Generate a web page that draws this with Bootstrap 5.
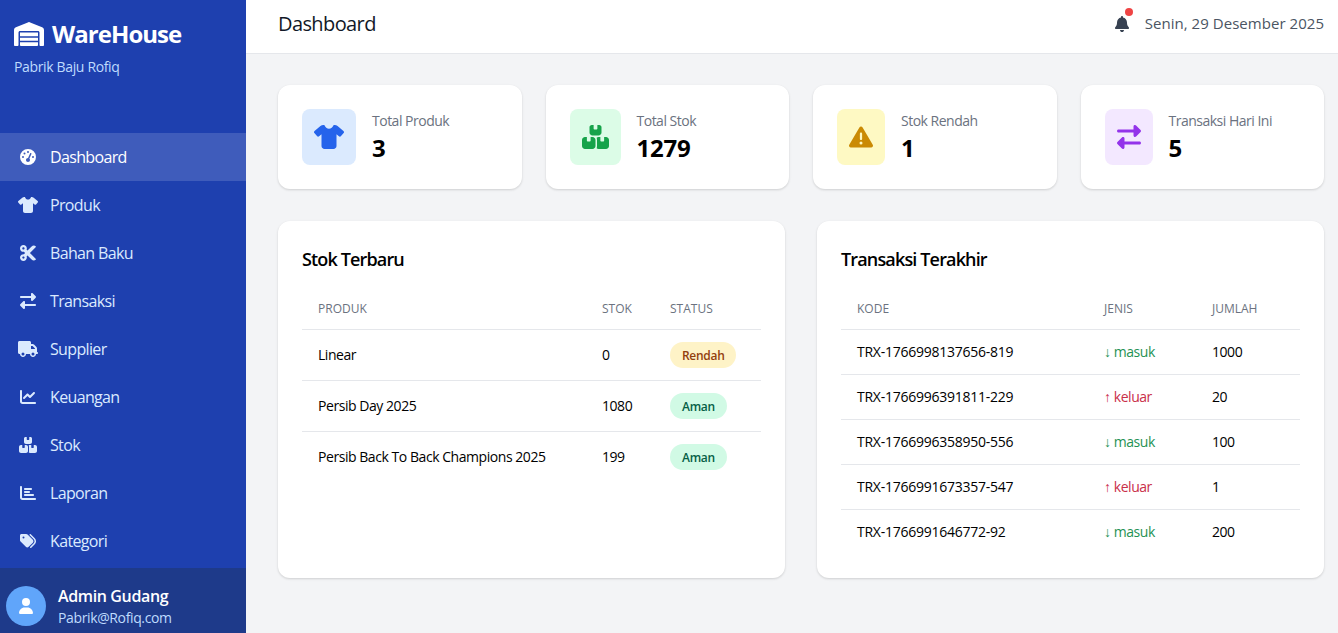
<!DOCTYPE html>
<html lang="id">
<head>
<meta charset="utf-8">
<title>WareHouse</title>
<link href="https://cdn.jsdelivr.net/npm/bootstrap@5.3.0/dist/css/bootstrap.min.css" rel="stylesheet">
<style>
html,body{height:100%;overflow:hidden}
body{font-family:"Open Sans","Noto Sans",sans-serif;background:#f3f4f6;color:#111827;font-size:14px}
.ico{fill:currentColor;display:block}
.app-shell{height:633px}
.side{width:246px;flex:none;background:#1e40af;color:#fff;overflow:hidden}
.brand{height:133px;padding:17px 14px 0}
.brand-name{font-size:24px;font-weight:700;line-height:34px;letter-spacing:-.95px}
.brand-sub{font-size:14px;color:#bfdbfe;line-height:20px;margin-top:6px;letter-spacing:-.35px}
.side-link{height:48px;color:#dbeafe;text-decoration:none;font-size:16px;letter-spacing:-.65px;padding-left:18px;gap:12px}
.side-link.active{background:rgba(255,255,255,.15);color:#fff}
.side-link .slot{width:20px;display:flex;justify-content:center}
.side-foot{background:#1e3a8a;height:65px;padding:18px 0 0 6px;gap:12px}
.avatar{width:40px;height:40px;border-radius:50%;background:#60a5fa;flex:none}
.foot-name{font-size:16px;font-weight:600;line-height:20px;letter-spacing:-.37px}
.foot-mail{font-size:14px;color:#bfdbfe;line-height:20px;margin-top:2px;letter-spacing:-.37px}
.top{height:54px;background:#fff;border-bottom:1px solid #e5e7eb;padding:0 14px 6px 32px}
.top h1{font-size:20px;font-weight:500;margin:0;letter-spacing:-.6px}
.bell-wrap{color:#374151;margin-right:16px}
.bell-dot{position:absolute;top:-8px;right:-4px;width:8px;height:8px;border-radius:50%;background:#ef4444}
.top-date{color:#4b5563;font-size:15px;letter-spacing:.04px}
.body-pad{padding:31px 14px 0 32px}
.sheet{background:#fff;border-radius:12px;box-shadow:0 1px 3px rgba(0,0,0,.1),0 1px 2px rgba(0,0,0,.06)}
.stat-card{height:104px;padding:24px;gap:16px}
.stat-box{height:56px;border-radius:8px}
.w54{width:54px}.w52{width:51px}.w48{width:48px}
.tone-blue{background:#dbeafe;color:#2563eb}
.tone-green{background:#dcfce7;color:#16a34a}
.tone-yellow{background:#fef9c3;color:#ca8a04}
.tone-purple{background:#f3e8ff;color:#9333ea}
.stat-label{font-size:14px;color:#6b7280;line-height:20px;letter-spacing:-.5px;margin-top:2px}
.stat-val{font-size:24px;font-weight:700;line-height:32px;color:#000;letter-spacing:-.2px;margin-top:1px}
.tables-row{--bs-gutter-x:32px;margin-top:32px}
.panel{height:357px;padding:24px}
.panel h2{font-size:18px;font-weight:600;line-height:29px;margin:0 0 15px;color:#000;letter-spacing:-.85px}
.data-tbl{--bs-table-bg:transparent;margin:0;table-layout:fixed;color:#000}
.data-tbl th{font-size:12px;font-weight:500;color:#6b7280;text-transform:uppercase;line-height:16px;padding:12px 16px;border-bottom:1px solid #e5e7eb}
.data-tbl td{font-size:14px;line-height:20px;padding:12px 16px;border-bottom:1px solid #e5e7eb;letter-spacing:-.45px;vertical-align:middle}
.data-tbl td.code-cell{letter-spacing:-.25px}
.data-tbl tr:last-child td{border-bottom:0}
.pill{display:inline-block;font-size:12px;font-weight:600;line-height:18px;padding:5px 12px 3px;border-radius:13px;letter-spacing:-.3px}
.pill-warn{background:#fef3c7;color:#92400e}
.pill-ok{background:#d1fae5;color:#065f46}
.data-tbl td.in{color:#1f9254}.data-tbl td.out{color:#c9304a}
.c-a{width:284px}.c-b{width:68px}
.c-k{width:247px}.c-j{width:108px}
</style>
</head>
<body>
<svg width="0" height="0" class="position-absolute">
<symbol id="i-wh" viewBox="0 0 640 512"><path d="M0 488V171.3c0-26.2 15.9-49.7 40.2-59.4L308.1 4.8c7.6-3.1 16.1-3.1 23.8 0L599.8 111.9c24.3 9.7 40.2 33.3 40.2 59.4V488c0 13.3-10.7 24-24 24H568c-13.3 0-24-10.7-24-24V224c0-17.7-14.3-32-32-32H128c-17.7 0-32 14.3-32 32V488c0 13.3-10.7 24-24 24H24c-13.3 0-24-10.7-24-24zm488 24H152c-13.3 0-24-10.7-24-24V432H512v56c0 13.3-10.7 24-24 24zM128 400V336H512v64H128zm0-96V224H512v80H128z"/></symbol>
<symbol id="i-gauge" viewBox="0 0 512 512"><path d="M0 256a256 256 0 1 1 512 0A256 256 0 1 1 0 256zM288 96a32 32 0 1 0 -64 0 32 32 0 1 0 64 0zM256 416c35.3 0 64-28.7 64-64c0-17.4-6.9-33.1-18.1-44.6L366 161.7c5.3-12.1-.2-26.3-12.3-31.6s-26.3 .2-31.6 12.3L257.9 288c-.6 0-1.3 0-1.9 0c-35.3 0-64 28.7-64 64s28.7 64 64 64zM176 144a32 32 0 1 0 -64 0 32 32 0 1 0 64 0zM96 288a32 32 0 1 0 0-64 32 32 0 1 0 0 64zm352-32a32 32 0 1 0 -64 0 32 32 0 1 0 64 0z"/></symbol>
<symbol id="i-shirt" viewBox="0 0 640 512"><path d="M211.8 0c7.8 0 14.3 5.7 16.7 13.2C240.8 51.9 277.1 80 320 80s79.2-28.1 91.5-66.8C413.9 5.7 420.4 0 428.2 0h12.6c22.5 0 44.2 7.9 61.5 22.3L628.5 127.4c6.6 5.5 10.7 13.5 11.4 22.1s-2.1 17.1-7.8 23.6l-56 64c-11.4 13.1-31.2 14.6-44.6 3.5L480 197.7V448c0 35.3-28.7 64-64 64H224c-35.3 0-64-28.7-64-64V197.7l-51.5 42.9c-13.3 11.1-33.1 9.6-44.6-3.5l-56-64c-5.7-6.5-8.5-15-7.8-23.6s4.8-16.6 11.4-22.1L137.7 22.3C155 7.9 176.7 0 199.2 0h12.6z"/></symbol>
<symbol id="i-cut" viewBox="0 32 448 448"><path d="M278.06 256L444.48 89.57c4.69-4.69 4.69-12.29 0-16.97-32.8-32.8-85.99-32.8-118.79 0L210.18 188.12l-24.86-24.86c4.31-10.92 6.68-22.81 6.68-35.26 0-53.02-42.98-96-96-96S0 74.98 0 128s42.98 96 96 96c4.54 0 8.99-.32 13.36-.93L142.29 256l-32.93 32.93c-4.37-.61-8.83-.93-13.36-.93-53.02 0-96 42.98-96 96s42.98 96 96 96 96-42.98 96-96c0-12.45-2.37-24.34-6.68-35.26l24.86-24.86L325.69 439.4c32.8 32.8 85.99 32.8 118.79 0 4.69-4.68 4.69-12.28 0-16.97L278.06 256zM96 160c-17.64 0-32-14.36-32-32s14.36-32 32-32 32 14.36 32 32-14.36 32-32 32zm0 256c-17.64 0-32-14.36-32-32s14.36-32 32-32 32 14.36 32 32-14.36 32-32 32z"/></symbol>
<symbol id="i-swap" viewBox="0 0 512 512"><path d="M32 96l320 0V32c0-12.9 7.8-24.6 19.8-29.6s25.7-2.2 34.9 6.9l96 96c6 6 9.4 14.1 9.4 22.6s-3.4 16.6-9.4 22.6l-96 96c-9.2 9.2-22.9 11.9-34.9 6.9s-19.8-16.6-19.8-29.6V160L32 160c-17.7 0-32-14.3-32-32s14.3-32 32-32zM480 352c17.7 0 32 14.3 32 32s-14.3 32-32 32H160v64c0 12.9-7.8 24.6-19.8 29.6s-25.7 2.2-34.9-6.9l-96-96c-6-6-9.4-14.1-9.4-22.6s3.4-16.6 9.4-22.6l96-96c9.2-9.2 22.9-11.9 34.9-6.9s19.8 16.6 19.8 29.6l0 64H480z"/></symbol>
<symbol id="i-truck" viewBox="0 0 640 512"><path d="M48 0C21.5 0 0 21.5 0 48V368c0 26.5 21.5 48 48 48H64c0 53 43 96 96 96s96-43 96-96H384c0 53 43 96 96 96s96-43 96-96h32c17.7 0 32-14.3 32-32s-14.3-32-32-32V288 256 237.3c0-17-6.7-33.3-18.7-45.3L512 114.7c-12-12-28.3-18.7-45.3-18.7H416V48c0-26.5-21.5-48-48-48H48zM416 160h50.7L544 237.3V256H416V160zM112 416a48 48 0 1 1 96 0 48 48 0 1 1 -96 0zm368-48a48 48 0 1 1 0 96 48 48 0 1 1 0-96z"/></symbol>
<symbol id="i-line" viewBox="0 0 512 512"><path d="M64 64c0-17.7-14.3-32-32-32S0 46.3 0 64V400c0 44.2 35.8 80 80 80H480c17.7 0 32-14.3 32-32s-14.3-32-32-32H80c-8.8 0-16-7.2-16-16V64zm406.6 86.6c12.5-12.5 12.5-32.8 0-45.3s-32.8-12.5-45.3 0L320 210.7l-57.4-57.4c-12.5-12.5-32.8-12.5-45.3 0l-112 112c-12.5 12.5-12.5 32.8 0 45.3s32.8 12.5 45.3 0L240 221.3l57.4 57.4c12.5 12.5 32.8 12.5 45.3 0l128-128z"/></symbol>
<symbol id="i-boxes" viewBox="0 0 576 512"><path d="M248 0H208c-26.5 0-48 21.5-48 48V160c0 35.3 28.7 64 64 64H352c35.3 0 64-28.7 64-64V48c0-26.5-21.5-48-48-48H328V80c0 8.8-7.2 16-16 16H264c-8.8 0-16-7.2-16-16V0zM64 256c-35.3 0-64 28.7-64 64V448c0 35.3 28.7 64 64 64H224c35.3 0 64-28.7 64-64V320c0-35.3-28.7-64-64-64H184v80c0 8.8-7.2 16-16 16H120c-8.8 0-16-7.2-16-16V256H64zM352 512H512c35.3 0 64-28.7 64-64V320c0-35.3-28.7-64-64-64H472v80c0 8.8-7.2 16-16 16H408c-8.8 0-16-7.2-16-16V256H352c-15 0-28.8 5.1-39.7 13.8c4.9 15.8 7.7 32.6 7.7 50.2V448c0 17.6-2.8 34.4-7.7 50.2C323.2 506.9 337 512 352 512z"/></symbol>
<symbol id="i-bars" viewBox="0 0 512 512"><path d="M32 32c17.7 0 32 14.3 32 32V400c0 8.8 7.2 16 16 16H480c17.7 0 32 14.3 32 32s-14.3 32-32 32H80c-44.2 0-80-35.8-80-80V64C0 46.3 14.3 32 32 32zm96 96c0-17.7 14.3-32 32-32l192 0c17.7 0 32 14.3 32 32s-14.3 32-32 32l-192 0c-17.7 0-32-14.3-32-32zm32 64H288c17.7 0 32 14.3 32 32s-14.3 32-32 32H160c-17.7 0-32-14.3-32-32s14.3-32 32-32zm0 96H416c17.7 0 32 14.3 32 32s-14.3 32-32 32H160c-17.7 0-32-14.3-32-32s14.3-32 32-32z"/></symbol>
<symbol id="i-tags" viewBox="0 0 512 512"><path d="M345 39.1L472.8 168.4c52.4 53 52.4 138.2 0 191.2L360.8 472.9c-9.3 9.4-24.5 9.5-33.9 .2s-9.5-24.5-.2-33.9L438.6 325.9c33.9-34.3 33.9-89.4 0-123.7L310.9 72.9c-9.3-9.4-9.2-24.6 .2-33.9s24.6-9.2 33.9 .2zM0 229.5V80C0 53.5 21.5 32 48 32H197.5c17 0 33.3 6.7 45.3 18.7l168 168c25 25 25 65.5 0 90.5L277.3 442.7c-25 25-65.5 25-90.5 0l-168-168C6.7 262.7 0 246.5 0 229.5zM144 144a32 32 0 1 0 -64 0 32 32 0 1 0 64 0z"/></symbol>
<symbol id="i-bell" viewBox="0 0 448 512"><path d="M224 0c-17.7 0-32 14.3-32 32V51.2C119 66 64 130.6 64 208v18.8c0 47-17.3 92.4-48.5 127.6l-7.4 8.3c-8.4 9.4-10.4 22.9-5.3 34.4S19.4 416 32 416H416c12.6 0 24-7.4 29.2-18.9s3.1-25-5.3-34.4l-7.4-8.3C401.3 319.2 384 273.9 384 226.8V208c0-77.4-55-142-128-156.8V32c0-17.7-14.3-32-32-32zm45.3 493.3c12-12 18.7-28.3 18.7-45.3H224 160c0 17 6.7 33.3 18.7 45.3s28.3 18.7 45.3 18.7s33.3-6.7 45.3-18.7z"/></symbol>
<symbol id="i-warn" viewBox="0 0 512 512"><path d="M256 32c14.2 0 27.3 7.5 34.5 19.8l216 368c7.3 12.4 7.3 27.7 .2 40.1S486.3 480 472 480H40c-14.3 0-27.6-7.7-34.7-20.1s-7-27.8 .2-40.1l216-368C228.7 39.5 241.8 32 256 32zm0 128c-13.3 0-24 10.7-24 24V296c0 13.3 10.7 24 24 24s24-10.7 24-24V184c0-13.3-10.7-24-24-24zm32 224a32 32 0 1 0 -64 0 32 32 0 1 0 64 0z"/></symbol>
<symbol id="i-user" viewBox="0 0 448 512"><path d="M224 256A128 128 0 1 0 224 0a128 128 0 1 0 0 256zm-45.7 48C79.8 304 0 383.8 0 482.3C0 498.7 13.3 512 29.7 512H418.3c16.4 0 29.7-13.3 29.7-29.7C448 383.8 368.2 304 269.7 304H178.3z"/></symbol>
</svg>
<div class="d-flex app-shell">
  <aside class="side d-flex flex-column">
    <div class="brand">
      <div class="d-flex align-items-center gap-2 brand-name"><svg class="ico" width="30" height="24"><use href="#i-wh"/></svg><span>WareHouse</span></div>
      <div class="brand-sub">Pabrik Baju Rofiq</div>
    </div>
    <nav class="flex-grow-1">
      <a class="side-link active d-flex align-items-center" href="#"><span class="slot"><svg class="ico" width="16" height="16"><use href="#i-gauge"/></svg></span>Dashboard</a>
      <a class="side-link d-flex align-items-center" href="#"><span class="slot"><svg class="ico" width="20" height="16"><use href="#i-shirt"/></svg></span>Produk</a>
      <a class="side-link d-flex align-items-center" href="#"><span class="slot"><svg class="ico" width="16" height="16"><use href="#i-cut"/></svg></span>Bahan Baku</a>
      <a class="side-link d-flex align-items-center" href="#"><span class="slot"><svg class="ico" width="16" height="16"><use href="#i-swap"/></svg></span>Transaksi</a>
      <a class="side-link d-flex align-items-center" href="#"><span class="slot"><svg class="ico" width="20" height="16"><use href="#i-truck"/></svg></span>Supplier</a>
      <a class="side-link d-flex align-items-center" href="#"><span class="slot"><svg class="ico" width="16" height="16"><use href="#i-line"/></svg></span>Keuangan</a>
      <a class="side-link d-flex align-items-center" href="#"><span class="slot"><svg class="ico" width="18" height="16"><use href="#i-boxes"/></svg></span>Stok</a>
      <a class="side-link d-flex align-items-center" href="#"><span class="slot"><svg class="ico" width="16" height="16"><use href="#i-bars"/></svg></span>Laporan</a>
      <a class="side-link d-flex align-items-center" href="#"><span class="slot"><svg class="ico" width="16" height="16"><use href="#i-tags"/></svg></span>Kategori</a>
    </nav>
    <div class="side-foot d-flex">
      <div class="avatar d-flex align-items-center justify-content-center"><svg class="ico text-white" width="14" height="16"><use href="#i-user"/></svg></div>
      <div>
        <div class="foot-name">Admin Gudang</div>
        <div class="foot-mail">Pabrik@Rofiq.com</div>
      </div>
    </div>
  </aside>
  <main class="flex-grow-1 d-flex flex-column">
    <header class="top d-flex align-items-center justify-content-between">
      <h1>Dashboard</h1>
      <div class="d-flex align-items-center">
        <div class="bell-wrap position-relative"><svg class="ico" width="14" height="16"><use href="#i-bell"/></svg><span class="bell-dot"></span></div>
        <span class="top-date">Senin, 29 Desember 2025</span>
      </div>
    </header>
    <div class="body-pad">
      <div class="row g-4">
        <div class="col-3"><div class="sheet stat-card d-flex">
          <div class="stat-box w54 tone-blue d-flex align-items-center justify-content-center"><svg class="ico" width="30" height="24"><use href="#i-shirt"/></svg></div>
          <div><div class="stat-label">Total Produk</div><div class="stat-val">3</div></div>
        </div></div>
        <div class="col-3"><div class="sheet stat-card d-flex">
          <div class="stat-box w52 tone-green d-flex align-items-center justify-content-center"><svg class="ico" width="27" height="24"><use href="#i-boxes"/></svg></div>
          <div><div class="stat-label">Total Stok</div><div class="stat-val">1279</div></div>
        </div></div>
        <div class="col-3"><div class="sheet stat-card d-flex">
          <div class="stat-box w48 tone-yellow d-flex align-items-center justify-content-center"><svg class="ico" width="24" height="24"><use href="#i-warn"/></svg></div>
          <div><div class="stat-label">Stok Rendah</div><div class="stat-val">1</div></div>
        </div></div>
        <div class="col-3"><div class="sheet stat-card d-flex">
          <div class="stat-box w48 tone-purple d-flex align-items-center justify-content-center"><svg class="ico" width="24" height="24"><use href="#i-swap"/></svg></div>
          <div><div class="stat-label">Transaksi Hari Ini</div><div class="stat-val">5</div></div>
        </div></div>
      </div>
      <div class="row tables-row">
        <div class="col-6"><div class="sheet panel">
          <h2>Stok Terbaru</h2>
          <table class="table data-tbl">
            <thead><tr><th class="c-a">Produk</th><th class="c-b">Stok</th><th>Status</th></tr></thead>
            <tbody>
              <tr><td>Linear</td><td>0</td><td><span class="pill pill-warn">Rendah</span></td></tr>
              <tr><td>Persib Day 2025</td><td>1080</td><td><span class="pill pill-ok">Aman</span></td></tr>
              <tr><td>Persib Back To Back Champions 2025</td><td>199</td><td><span class="pill pill-ok">Aman</span></td></tr>
            </tbody>
          </table>
        </div></div>
        <div class="col-6"><div class="sheet panel">
          <h2>Transaksi Terakhir</h2>
          <table class="table data-tbl">
            <thead><tr><th class="c-k">Kode</th><th class="c-j">Jenis</th><th>Jumlah</th></tr></thead>
            <tbody>
              <tr><td class="code-cell">TRX-1766998137656-819</td><td class="in">↓ masuk</td><td>1000</td></tr>
              <tr><td class="code-cell">TRX-1766996391811-229</td><td class="out">↑ keluar</td><td>20</td></tr>
              <tr><td class="code-cell">TRX-1766996358950-556</td><td class="in">↓ masuk</td><td>100</td></tr>
              <tr><td class="code-cell">TRX-1766991673357-547</td><td class="out">↑ keluar</td><td>1</td></tr>
              <tr><td class="code-cell">TRX-1766991646772-92</td><td class="in">↓ masuk</td><td>200</td></tr>
            </tbody>
          </table>
        </div></div>
      </div>
    </div>
  </main>
</div>
<script src="https://cdn.jsdelivr.net/npm/bootstrap@5.3.0/dist/js/bootstrap.bundle.min.js"></script>
</body>
</html>
